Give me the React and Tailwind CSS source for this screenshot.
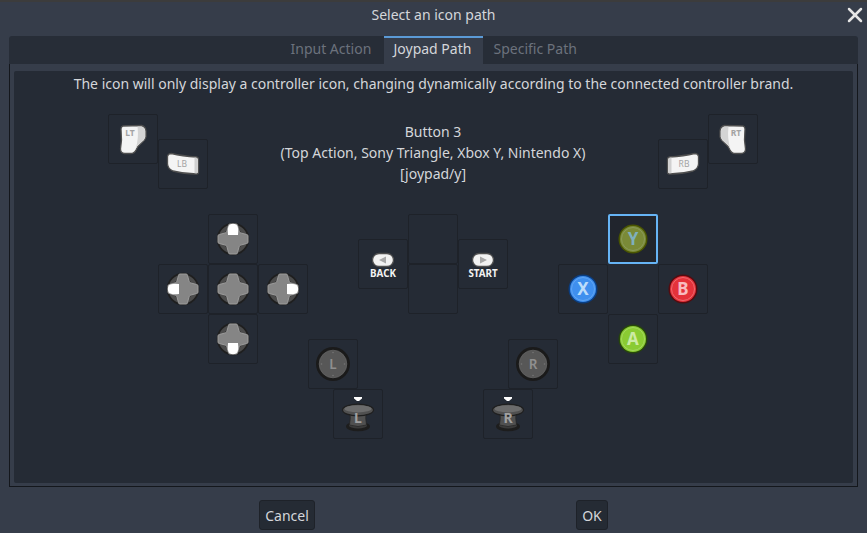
import React from 'react';
import { X } from 'lucide-react';

// each icon is drawn on the 50x50 cell of the remap dialog
const Trigger = ({ label, flip }) => (
    <svg width="50" height="50" viewBox="0 0 50 50">
        <g transform={flip ? 'translate(50 0) scale(-1 1)' : undefined}>
            <path d="M15 12 L33.5 11.5 Q37.5 12.5 38 17 L38 23 Q37.5 26 33.5 29 Q29.5 32 28 36 Q26.5 39.5 22.5 39.5 L16.5 39.5 Q12.5 39 12.5 35 L13.5 26 L13 15 Q13 12.5 15 12 Z" fill="#f4f4f4" stroke="#4f4f4f" strokeWidth="1.3" />
            <path d="M33 12.5 Q37 13.5 37 17 L37 23 Q36.5 25.5 33 28.5 Q29 31.5 27.5 35 Q31 25 29.5 12.5 Z" fill="#d4d4d4" />
        </g>
        <text x={flip ? 28 : 22} y="21.5" textAnchor="middle" className="font-['Noto_Sans',sans-serif] font-bold text-[8.5px]" fill="#a3a3a3">{label}</text>
    </svg>
);

const Bumper = ({ label, flip }) => (
    <svg width="50" height="50" viewBox="0 0 50 50">
        <g transform={flip ? 'translate(50 0) scale(-1 1)' : undefined}>
            <path d="M13.5 14.5 Q24 17 38.5 18 Q40.5 18.5 40.5 20.5 L40.5 33 Q40.5 35 38.5 35 Q26 35 15 32 Q10 30 9.5 25 L9.5 17.5 Q10 14.5 13.5 14.5 Z" fill="#f4f4f4" stroke="#4f4f4f" strokeWidth="1.3" />
            <path d="M36.5 18.5 L38.5 18.7 Q39.7 19.3 39.7 20.5 L39.7 33 Q39.7 34.2 38.5 34.2 L36.5 34.2 Z" fill="#d0d0d0" />
        </g>
        <text x={flip ? 26 : 24} y="28" textAnchor="middle" className="font-['Noto_Sans',sans-serif] text-[8.5px]" fill="#a3a3a3">{label}</text>
    </svg>
);

const DPAD_ARMS = {
    up: <path d="M20 21 Q19 13 21.5 10.8 Q25 8.8 28.5 10.8 Q31 13 30 21 Z" fill="#fff" />,
    down: <path d="M20 29 Q19 37 21.5 39.2 Q25 41.2 28.5 39.2 Q31 37 30 29 Z" fill="#fff" />,
    left: <path d="M21 20 Q13 19 10.8 21.5 Q8.8 25 10.8 28.5 Q13 31 21 30 Z" fill="#fff" />,
    right: <path d="M29 20 Q37 19 39.2 21.5 Q41.2 25 39.2 28.5 Q37 31 29 30 Z" fill="#fff" />,
};

const Dpad = ({ dir }) => (
    <svg width="50" height="50" viewBox="0 0 50 50">
        <circle cx="25" cy="25" r="16.2" fill="#1f1f1f" />
        <circle cx="25" cy="25" r="12.5" fill="none" stroke="#4c4c4c" strokeWidth="4" />
        <path d="M20.5 11.5 Q20.5 10 22 10 L28 10 Q29.5 10 29.5 11.5 L31 17 Q31.5 19 33 19 L38.5 20.5 Q40 20.5 40 22 L40 28 Q40 29.5 38.5 29.5 L33 31 Q31.5 31 31 33 L29.5 38.5 Q29.5 40 28 40 L22 40 Q20.5 40 20.5 38.5 L19 33 Q18.5 31 17 31 L11.5 29.5 Q10 29.5 10 28 L10 22 Q10 20.5 11.5 20.5 L17 19 Q18.5 19 19 17 Z" fill="#858585" stroke="#9c9c9c" strokeWidth="1" />
        {DPAD_ARMS[dir]}
    </svg>
);

const FaceButton = ({ letter, fill, edge, ring, ink }) => (
    <svg width="50" height="50" viewBox="0 0 50 50">
        <circle cx="25" cy="25" r="14.5" fill={edge} />
        <circle cx="25" cy="25" r="13" fill={fill} />
        <circle cx="25" cy="25" r="11.5" fill="none" stroke={ring} strokeWidth="1" />
        <text x="25" y="31" textAnchor="middle" className="font-['Noto_Sans',sans-serif] font-bold text-[17px]" fill={ink}>{letter}</text>
    </svg>
);

const Stick = ({ letter }) => (
    <svg width="50" height="50" viewBox="0 0 50 50">
        <circle cx="25" cy="25" r="17" fill="#1a1a1a" />
        <circle cx="25" cy="25" r="13.8" fill="#575757" stroke="#636363" strokeWidth="0.8" />
        <g fill="#757575">
            <circle cx="25" cy="13.5" r="0.8" />
            <circle cx="25" cy="36.5" r="0.8" />
            <circle cx="13.5" cy="25" r="0.8" />
            <circle cx="36.5" cy="25" r="0.8" />
        </g>
        <text x="25" y="30" textAnchor="middle" className="font-['Noto_Sans',sans-serif] font-semibold text-[13.5px]" fill="#8f8f8f">{letter}</text>
    </svg>
);

const StickPress = ({ letter }) => (
    <svg width="50" height="50" viewBox="0 0 50 50">
        <path d="M21 8 L29 8 L29 9.5 L26 12 L24 12 L21 9.5 Z" fill="#fff" />
        <ellipse cx="25" cy="37.5" rx="12" ry="4.8" fill="#1d1d1d" />
        <ellipse cx="25" cy="36.5" rx="9" ry="3" fill="#3a3a3a" />
        <path d="M16.5 22 L33.5 22 Q32 28 33.5 36 Q25 39 16.5 36 Q18 28 16.5 22 Z" fill="#505050" stroke="#262626" strokeWidth="0.8" />
        <ellipse cx="25" cy="21" rx="15.5" ry="5.8" fill="#505050" stroke="#1f1f1f" strokeWidth="1.2" />
        <ellipse cx="25" cy="19.8" rx="13.5" ry="3.6" fill="#6c6c6c" />
        <text x="25" y="34" textAnchor="middle" className="font-['Noto_Sans',sans-serif] font-bold text-[14px]" fill="#a0a0a0">{letter}</text>
    </svg>
);

const MenuButton = ({ label, back }) => (
    <svg width="50" height="50" viewBox="0 0 50 50">
        <rect x="14.5" y="14.5" width="21" height="13" rx="6.5" fill="#f2f2f2" stroke="#4f4f4f" strokeWidth="1.3" />
        <path d={back ? 'M21 21 L28 17.5 L28 24.5 Z' : 'M29 21 L22 17.5 L22 24.5 Z'} fill="#a8a8a8" />
        <text x="25" y="37.5" textAnchor="middle" className="font-['Noto_Sans',sans-serif] font-bold text-[9.8px]" fill="#f2f2f2">{label}</text>
    </svg>
);

const Cell = ({ col, row, selected, children }) => (
    <div
        className={`w-[50px] h-[50px] rounded-[2px] border ${selected ? 'border-2 border-[#66b4f5] bg-[#21252d]' : 'border-[#1e2229]'}`}
        style={{ gridColumn: `${col} / span 2`, gridRow: `${row} / span 2` }}
    >
        <div className={selected ? '-m-[2px]' : '-m-px'}>{children}</div>
    </div>
);

const App = () => {
    return (
        <div className="w-[867px] h-[533px] flex flex-col overflow-hidden bg-[#363d4a] border-t-2 border-[#3c3c3c] font-['Noto_Sans',sans-serif] text-[14px] text-[#d4d6da]">
            {/* Title bar */}
            <div className="relative h-[34px] shrink-0 flex items-start justify-center pt-[3px] leading-[20px]">
                <span>Select an icon path</span>
                <X size={24} strokeWidth={2.5} className="absolute right-0 top-px text-[#e6e6e6]" />
            </div>

            {/* Tabs */}
            <div className="mx-[9px] h-[28px] shrink-0 flex justify-center bg-[#272d37] rounded-t-[3px] whitespace-nowrap">
                <div className="w-[103px] pl-[10px] pt-[3px] leading-[20px] text-[#6c727d]">Input Action</div>
                <div className="w-[99px] pl-[10px] pt-[1px] leading-[20px] bg-[#363d4a] border-t-2 border-[#5b9ad6] text-[#d4d6da]">Joypad Path</div>
                <div className="w-[104px] pl-[11px] pt-[3px] leading-[20px] text-[#6c727d]">Specific Path</div>
            </div>

            {/* Tab content */}
            <div className="mx-[9px] h-[423px] shrink-0 border-x border-b border-[#14171c] px-[4px] pt-[7px] pb-[3px]">
                <div className="h-full bg-[#252b35] rounded-[2px] flex flex-col">
                    <p className="text-center leading-[20px] mt-[3px]">The icon will only display a controller icon, changing dynamically according to the connected controller brand.</p>
                    <div className="ml-[94px] mt-[20px] grid grid-cols-[repeat(26,25px)] grid-rows-[repeat(13,25px)] w-[650px]">
                        <Cell col={1} row={1}><Trigger label="LT" /></Cell>
                        <Cell col={3} row={2}><Bumper label="LB" /></Cell>
                        <Cell col={23} row={2}><Bumper label="RB" flip /></Cell>
                        <Cell col={25} row={1}><Trigger label="RT" flip /></Cell>

                        <div className="col-start-5 col-end-23 row-start-1 row-end-4 pt-[7px] text-center leading-[21px]">
                            <div>Button 3</div>
                            <div>(Top Action, Sony Triangle, Xbox Y, Nintendo X)</div>
                            <div>[joypad/y]</div>
                        </div>

                        <Cell col={5} row={5}><Dpad dir="up" /></Cell>
                        <Cell col={3} row={7}><Dpad dir="left" /></Cell>
                        <Cell col={5} row={7}><Dpad /></Cell>
                        <Cell col={7} row={7}><Dpad dir="right" /></Cell>
                        <Cell col={5} row={9}><Dpad dir="down" /></Cell>

                        <Cell col={11} row={6}><MenuButton label="BACK" back /></Cell>
                        <Cell col={13} row={5} />
                        <Cell col={13} row={7} />
                        <Cell col={15} row={6}><MenuButton label="START" /></Cell>

                        <Cell col={21} row={5} selected>
                            <FaceButton letter="Y" fill="#7a8a37" edge="#4a5500" ring="#8a9a5a" ink="#7fb0bd" />
                        </Cell>
                        <Cell col={19} row={7}>
                            <FaceButton letter="X" fill="#3f8fee" edge="#0a3e82" ring="#62a6f2" ink="#bcdcfa" />
                        </Cell>
                        <Cell col={23} row={7}>
                            <FaceButton letter="B" fill="#e5323a" edge="#560a0e" ring="#ee6a70" ink="#f8bcc0" />
                        </Cell>
                        <Cell col={21} row={9}>
                            <FaceButton letter="A" fill="#8acb32" edge="#27470a" ring="#a4d860" ink="#cdeaa4" />
                        </Cell>

                        <Cell col={9} row={10}><Stick letter="L" /></Cell>
                        <Cell col={10} row={12}><StickPress letter="L" /></Cell>
                        <Cell col={17} row={10}><Stick letter="R" /></Cell>
                        <Cell col={16} row={12}><StickPress letter="R" /></Cell>
                    </div>
                </div>
            </div>

            {/* Footer buttons */}
            <div className="flex justify-between px-[259px] pt-[13px]">
                <button className="h-[30px] w-[56px] rounded-[3px] bg-[#252b34] border border-[#1e2229] text-[#d4d6da]">Cancel</button>
                <button className="h-[30px] w-[32px] rounded-[3px] bg-[#252b34] border border-[#1e2229] text-[#d4d6da]">OK</button>
            </div>
        </div>
    );
};

export default App;
